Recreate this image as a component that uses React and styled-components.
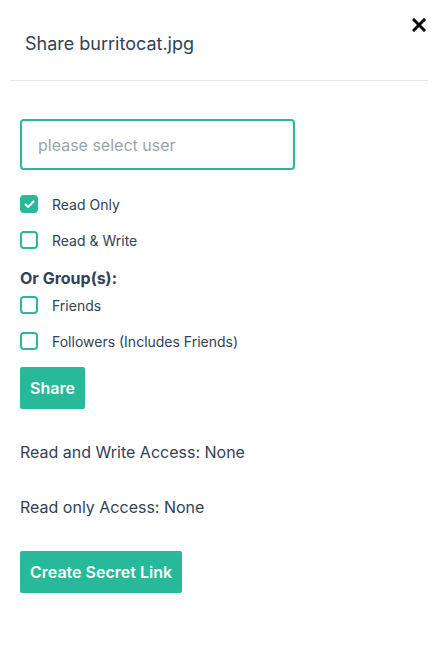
import React from "react";
import styled, { createGlobalStyle } from "styled-components";

const Global = createGlobalStyle`
  html, body { margin: 0; padding: 0; background: #fff; }
  body { font-family: Inter, "Noto Sans", sans-serif; color: #334155; }
  * { box-sizing: border-box; }
`;

const TEAL = "#27b99a";

const Modal = styled.div`
  width: 438px;
  min-height: 668px;
  background: #fff;
  position: relative;
`;

const Header = styled.div`
  height: 81px;
  margin: 0 10px;
  padding: 0 15px;
  display: flex;
  align-items: center;
  border-bottom: 1px solid #e5e7eb;
`;

const Title = styled.h2`
  margin: 7px 0 0;
  font-size: 18px;
  font-weight: 400;
  color: #334155;
`;

const Close = styled.button`
  position: absolute;
  top: 16px;
  right: 10px;
  width: 18px;
  height: 18px;
  padding: 0;
  border: none;
  background: none;
  display: flex;
  align-items: center;
  justify-content: center;
  cursor: pointer;
`;

const Body = styled.div`
  padding: 38px 20px 0;
  display: flex;
  flex-direction: column;
`;

const Input = styled.input`
  width: 275px;
  height: 51px;
  border: 2px solid ${TEAL};
  border-radius: 4px;
  padding: 0 16px;
  font-family: inherit;
  font-size: 16px;
  color: #334155;
  outline: none;
  &::placeholder { color: #9ca3af; }
`;

const Options = styled.div`
  margin-top: 25px;
  display: flex;
  flex-direction: column;
`;

const Row = styled.label`
  display: flex;
  align-items: center;
  gap: 14px;
  height: 18px;
  margin-bottom: ${p => p.$mb ?? 18}px;
  font-size: 14px;
  color: #334155;
`;

const Box = styled.span`
  width: 18px;
  height: 18px;
  border-radius: 4px;
  border: 2px solid ${TEAL};
  background: ${p => (p.$checked ? TEAL : "#fff")};
  display: flex;
  align-items: center;
  justify-content: center;
  flex-shrink: 0;
`;

const GroupLabel = styled.div`
  font-size: 16px;
  font-weight: 700;
  color: #334155;
  margin: 2px 0 9px;
  line-height: 18px;
`;

const Button = styled.button`
  align-self: flex-start;
  height: 42px;
  margin-top: ${p => p.$mt ?? 0}px;
  padding: 0 10px;
  background: ${TEAL};
  color: #fff;
  border: none;
  border-radius: 2px;
  font-family: inherit;
  font-size: 16px;
  font-weight: 600;
  cursor: pointer;
`;

const Info = styled.p`
  margin: ${p => p.$mt}px 0 0;
  font-size: 16px;
  line-height: 20px;
  color: #334155;
`;

const Check = () => (
  <svg width="11" height="9" viewBox="0 0 11 9">
    <path d="M1.5 4.5 L4.2 7 L9.5 1.5" fill="none" stroke="#fff" strokeWidth="2" strokeLinecap="round" strokeLinejoin="round" />
  </svg>
);

const Cb = ({ checked, children, mb }) => (
  <Row $mb={mb}>
    <Box $checked={checked}>{checked && <Check />}</Box>
    {children}
  </Row>
);

export default function App() {
  return (
    <>
      <Global />
      <Modal>
        <Header>
          <Title>Share burritocat.jpg</Title>
        </Header>
        <Close aria-label="close">
          <svg width="14" height="14" viewBox="0 0 14 14">
            <path d="M2 2 L12 12 M12 2 L2 12" stroke="#000" strokeWidth="3" strokeLinecap="square" />
          </svg>
        </Close>
        <Body>
          <Input placeholder="please select user" />
          <Options>
            <Cb checked>Read Only</Cb>
            <Cb mb={18}>Read &amp; Write</Cb>
            <GroupLabel>Or Group(s):</GroupLabel>
            <Cb>Friends</Cb>
            <Cb mb={17}>Followers (Includes Friends)</Cb>
          </Options>
          <Button>Share</Button>
          <Info $mt={33}>Read and Write Access: None</Info>
          <Info $mt={35}>Read only Access: None</Info>
          <Button $mt={34}>Create Secret Link</Button>
        </Body>
      </Modal>
    </>
  );
}
